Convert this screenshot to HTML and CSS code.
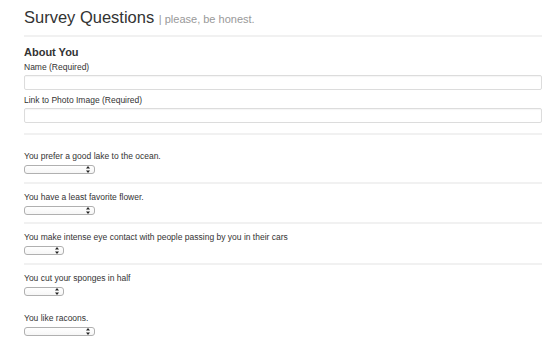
FILE: index.html
```html
<!DOCTYPE html>
<html lang="en">
<head>
    <meta charset="UTF-8">
    <meta name="viewport" content="width=device-width, initial-scale=1.0">
    <title>Survey Questions</title>
    <link rel="stylesheet" href="styles.css">
</head>
<body>
    <div class="container">
        <h1>Survey Questions <small>| please, be honest.</small></h1>
        <hr class="rule">

        <section class="about">
            <h2>About You</h2>
            <label class="field-label" for="name">Name (Required)</label>
            <input class="field" type="text" id="name">
            <label class="field-label" for="photo">Link to Photo Image (Required)</label>
            <input class="field" type="text" id="photo">
        </section>
        <hr class="rule about-rule">

        <div class="questions">
            <div class="question">
                <p>You prefer a good lake to the ocean.</p>
                <div class="picker wide">
                    <select><option></option></select>
                    <svg class="arrows" width="4" height="7" viewBox="0 0 4 7"><path d="M2 0 L4 2.6 L0 2.6 Z M2 7 L4 4.4 L0 4.4 Z" fill="#222"/></svg>
                </div>
            </div>
            <div class="question">
                <p>You have a least favorite flower.</p>
                <div class="picker wide">
                    <select><option></option></select>
                    <svg class="arrows" width="4" height="7" viewBox="0 0 4 7"><path d="M2 0 L4 2.6 L0 2.6 Z M2 7 L4 4.4 L0 4.4 Z" fill="#222"/></svg>
                </div>
            </div>
            <div class="question">
                <p>You make intense eye contact with people passing by you in their cars</p>
                <div class="picker">
                    <select><option></option></select>
                    <svg class="arrows" width="4" height="7" viewBox="0 0 4 7"><path d="M2 0 L4 2.6 L0 2.6 Z M2 7 L4 4.4 L0 4.4 Z" fill="#222"/></svg>
                </div>
            </div>
            <div class="question no-rule">
                <p>You cut your sponges in half</p>
                <div class="picker">
                    <select><option></option></select>
                    <svg class="arrows" width="4" height="7" viewBox="0 0 4 7"><path d="M2 0 L4 2.6 L0 2.6 Z M2 7 L4 4.4 L0 4.4 Z" fill="#222"/></svg>
                </div>
            </div>
            <div class="question no-rule">
                <p>You like racoons.</p>
                <div class="picker wide">
                    <select><option></option></select>
                    <svg class="arrows" width="4" height="7" viewBox="0 0 4 7"><path d="M2 0 L4 2.6 L0 2.6 Z M2 7 L4 4.4 L0 4.4 Z" fill="#222"/></svg>
                </div>
            </div>
        </div>
    </div>
</body>
</html>
```

FILE: styles.css
```css
:root {
    --text-color: #333;
    --muted-color: #999;
    --rule-color: #f1f1f1;
    --field-border: #dcdcdc;
}

body {
    margin: 0;
    font-family: 'Liberation Sans', Arial, Helvetica, sans-serif;
    color: var(--text-color);
    background-color: #fff;
}

.container {
    padding: 8px 8px 0 24px;
}

h1 {
    margin: 0 0 7px;
    font-size: 16.5px;
    line-height: 18px;
    font-weight: normal;
}

h1 small {
    font-size: 11px;
    color: var(--muted-color);
}

.rule {
    margin: 0;
    height: 2px;
    border: none;
    background-color: var(--rule-color);
}

.about h2 {
    margin: 9px 0 3px;
    font-size: 11px;
    line-height: 13px;
    font-weight: bold;
}

.field-label {
    display: block;
    font-size: 8.5px;
    line-height: 10px;
}

.field {
    display: block;
    box-sizing: border-box;
    width: 100%;
    height: 15px;
    margin: 3px 0 5px;
    padding: 0 4px;
    border: 1px solid var(--field-border);
    border-radius: 2px;
    box-shadow: inset 0 1px 1px rgba(0, 0, 0, 0.04);
}

.about-rule {
    margin-top: 10px;
}

.questions {
    margin-top: 8px;
}

.question {
    padding: 8px 0 7.5px;
    border-bottom: 2px solid var(--rule-color);
}

.question.no-rule {
    border-bottom-color: transparent;
}

.question p {
    margin: 0;
    font-size: 8.5px;
    line-height: 10px;
}

.picker {
    position: relative;
    width: 40px;
    height: 9px;
    margin-top: 4px;
}

.picker.wide {
    width: 71px;
}

.picker select {
    display: block;
    box-sizing: border-box;
    width: 100%;
    height: 100%;
    margin: 0;
    padding: 0;
    font-size: 0;
    appearance: none;
    -webkit-appearance: none;
    background: linear-gradient(#fff, #f6f6f6);
    border: 1px solid #b0b0b0;
    border-radius: 3px;
}

.picker .arrows {
    position: absolute;
    top: 1px;
    right: 5px;
}
```
